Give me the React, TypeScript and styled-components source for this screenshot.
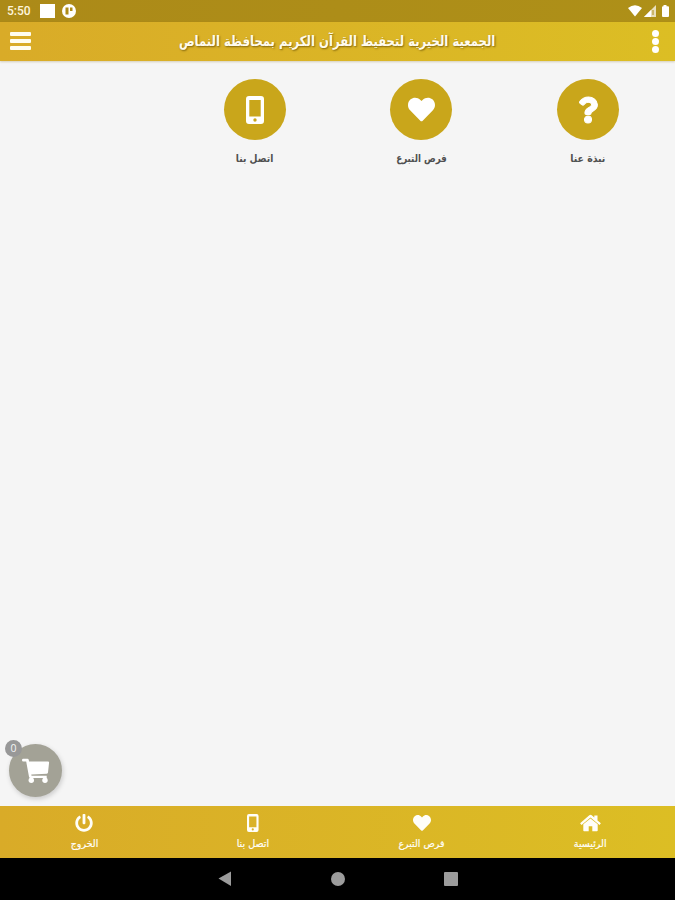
import React from "react";
import styled, { createGlobalStyle } from "styled-components";
import { FaHeart, FaPowerOff, FaQuestion } from "react-icons/fa";

const GlobalStyle = createGlobalStyle`
  * { box-sizing: border-box; }
  body { margin: 0; background: #f5f5f5; font-family: "DejaVu Sans", sans-serif; }
`;

const Screen = styled.div`
  display: flex;
  flex-direction: column;
  width: 675px;
  height: 900px;
  overflow: hidden;
  background: #f5f5f5;
`;

const StatusBar = styled.div`
  display: flex;
  align-items: center;
  justify-content: space-between;
  flex: 0 0 22px;
  padding: 0 5px 0 7px;
  background: linear-gradient(90deg, #ac8a18, #ae9018);
`;

const StatusGroup = styled.div<{ $gap: number }>`
  display: flex;
  align-items: center;
  gap: ${(p) => p.$gap}px;
  height: 22px;
  svg { display: block; }
`;

const Clock = styled.span`
  width: 25px;
  color: #fff6dc;
  font: 500 12px/23px Roboto, sans-serif;
  white-space: nowrap;
`;

const Square = styled.span`
  width: 15px;
  height: 14px;
  margin-left: 1px;
  background: #fff;
`;

const Header = styled.header`
  display: flex;
  align-items: center;
  justify-content: space-between;
  flex: 0 0 39px;
  padding: 0 15px 1px 10px;
  background: linear-gradient(90deg, #d9ab28, #dcbe24);
  box-shadow: 0 1px 2px rgba(120, 90, 0, 0.25);
`;

const Title = styled.h1`
  display: flex;
  justify-content: center;
  width: 320px;
  margin: 0 8px 0 0;
  color: #fffbee;
  font-size: 14px;
  font-weight: 700;
  line-height: 36px;
  white-space: nowrap;
  text-shadow: 1px 1px 2px rgba(80, 60, 0, 0.65);
`;

const Fit = styled.span<{ $scale: number }>`
  display: inline-block;
  transform: scaleX(${(p) => p.$scale});
`;

const MenuButton = styled.button`
  display: flex;
  flex-direction: column;
  gap: 3px;
  width: 21px;
  padding: 0;
  border: 0;
  background: none;
`;

const Bar = styled.span`
  height: 4px;
  border-radius: 1px;
  background: #fffdf0;
`;

const MoreButton = styled(MenuButton)`
  width: 8px;
  gap: 1px;
`;

const Dot = styled.span`
  width: 7px;
  height: 7px;
  border-radius: 50%;
  background: #fff;
`;

const Content = styled.main`
  position: relative;
  flex: 1;
  padding: 18px 4px 0 5px;
`;

const Shortcuts = styled.div`
  display: grid;
  grid-template-columns: repeat(4, 1fr);
`;

const Shortcut = styled.a`
  display: flex;
  flex-direction: column;
  align-items: center;
  color: #505050;
`;

const Disc = styled.span`
  display: grid;
  place-items: center;
  width: 62px;
  height: 61px;
  border-radius: 50%;
  background: #c9a61b;
  color: #fff;
`;

const BoldQuestion = styled(FaQuestion)`
  overflow: visible;
  stroke: currentColor;
  stroke-width: 20px;
`;

const Label = styled.span`
  margin-top: 9px;
  font-size: 10.5px;
  font-weight: 700;
  line-height: 18px;
  white-space: nowrap;
`;

const Cart = styled.button`
  position: absolute;
  left: 9px;
  bottom: 9px;
  display: grid;
  place-items: center;
  width: 53px;
  height: 53px;
  padding: 0;
  border: 0;
  border-radius: 50%;
  background: #a3a296;
  color: #fff;
  box-shadow: 1px 2px 5px rgba(0, 0, 0, 0.18);
`;

const Badge = styled.span`
  position: absolute;
  left: -4px;
  top: -4px;
  width: 17px;
  height: 17px;
  border-radius: 50%;
  background: #989898;
  color: #f4f4f4;
  font: 10.5px/17px "Open Sans", sans-serif;
  text-align: center;
`;

const TabBar = styled.nav`
  display: grid;
  grid-template-columns: repeat(4, 1fr);
  flex: 0 0 52px;
  background: linear-gradient(90deg, #d9ab28, #dcbe24);
`;

const Tab = styled.a`
  display: flex;
  flex-direction: column;
  align-items: center;
  padding-top: 8px;
  color: #fffef8;
`;

const TabLabel = styled.span`
  margin-top: 4px;
  font-size: 10px;
  line-height: 16px;
  white-space: nowrap;
  -webkit-text-stroke: 0.2px #fffef8;
`;

const SystemNav = styled.div`
  display: flex;
  justify-content: center;
  align-items: center;
  gap: 99px;
  flex: 0 0 42px;
  background: #000;
  svg { display: block; }
`;

const MobileIcon = ({ height }: { height: number }) => (
  <svg width={(height * 18) / 28} height={height} viewBox="0 0 18 28" fill="currentColor">
    <path
      fillRule="evenodd"
      d="M3 0h12a3 3 0 0 1 3 3v22a3 3 0 0 1-3 3H3a3 3 0 0 1-3-3V3a3 3 0 0 1 3-3zM3.300 4v16.500h11.400V4zM9 22.300a1.700 1.700 0 1 0 0 3.400 1.700 1.700 0 0 0 0-3.400z"
    />
  </svg>
);

const HomeIcon = () => (
  <svg width="21" height="18" viewBox="0 0 21 18" fill="currentColor">
    <path d="M10.500 4.400L17.700 10.300V16.500q0 .8-.8.800H12.300V12.200H8.700v5.100H4.100q-.8 0-.8-.8V10.300z" />
    <path d="M.1 9.200L9.300 1.300q1.200-.9 2.400 0L14.300 3.600V1.500h3.200v4.900l3.400 2.800-1.400 1.700L10.500 3.500 1.500 10.900z" />
  </svg>
);

const CartIcon = () => (
  <svg width="28" height="26" viewBox="0 0 28 26" fill="currentColor">
    <path d="M1.300.8H5.500q1 0 1.300 1.100L7.100 3.400H26q1.200 0 1.100 1.200L26 14.600q-.1 1-1.100 1.100L9.300 16.500l.2 1.300H24.700v2.200H8.500q-1.300 0-1.500-1.300L4.200 3.600H1.300Q0 3.600 0 2.200T1.300.8z" />
    <circle cx="9.300" cy="22.200" r="2.700" />
    <circle cx="23" cy="22.200" r="2.700" />
  </svg>
);

const shortcuts = [
  { label: "اتصل بنا", icon: <MobileIcon height={28} />, scale: 0.87 },
  { label: "فرص التبرع", icon: <FaHeart size={27} />, scale: 0.83 },
  { label: "نبذة عنا", icon: <BoldQuestion size={26} />, scale: 0.89 },
];

const tabs = [
  { label: "الخروج", icon: <FaPowerOff size={18} />, scale: 0.95 },
  { label: "اتصل بنا", icon: <MobileIcon height={18} />, scale: 0.96 },
  { label: "فرص التبرع", icon: <FaHeart size={18} />, scale: 0.94 },
  { label: "الرئيسية", icon: <HomeIcon />, scale: 0.95 },
];

export default function App() {
  return (
    <Screen>
      <GlobalStyle />
      <StatusBar>
        <StatusGroup $gap={7}>
          <Clock>5:50</Clock>
          <Square />
          <svg width="14" height="14" viewBox="0 0 14 14">
            <circle cx="7" cy="7" r="7" fill="#fff" />
            <path d="M3.500 3.500h3v7h-3zM8 3.500h2.500V7H8z" fill="#ad8c18" />
          </svg>
        </StatusGroup>
        <StatusGroup $gap={2}>
          <svg width="14" height="12" viewBox="0 0 14 12">
            <path d="M0 3Q7-2.4 14 3L7 11.5z" fill="#fff" />
          </svg>
          <svg width="12" height="12" viewBox="0 0 12 12">
            <path d="M12 0v12H0z" fill="#e9dfbd" />
            <path d="M7 5v7H0z" fill="#fff" />
            <path d="M9 5v5" stroke="#ad8c18" />
          </svg>
          <svg width="12" height="12" viewBox="0 0 12 12">
            <path d="M5.500 0h3v1.200H10q1 0 1 1V11q0 1-1 1H5q-1 0-1-1V2.200q0-1 1-1h.5z" fill="#fff" />
          </svg>
        </StatusGroup>
      </StatusBar>
      <Header>
        <MenuButton aria-label="القائمة">
          <Bar />
          <Bar />
          <Bar />
        </MenuButton>
        <Title dir="rtl">
          <Fit $scale={0.832}>الجمعية الخيرية لتحفيظ القرآن الكريم بمحافظة النماص</Fit>
        </Title>
        <MoreButton aria-label="المزيد">
          <Dot />
          <Dot />
          <Dot />
        </MoreButton>
      </Header>
      <Content>
        <Shortcuts>
          <span />
          {shortcuts.map((s) => (
            <Shortcut key={s.label}>
              <Disc>{s.icon}</Disc>
              <Label dir="rtl">
                <Fit $scale={s.scale}>{s.label}</Fit>
              </Label>
            </Shortcut>
          ))}
        </Shortcuts>
        <Cart aria-label="السلة">
          <CartIcon />
          <Badge>0</Badge>
        </Cart>
      </Content>
      <TabBar>
        {tabs.map((t) => (
          <Tab key={t.label}>
            {t.icon}
            <TabLabel dir="rtl">
              <Fit $scale={t.scale}>{t.label}</Fit>
            </TabLabel>
          </Tab>
        ))}
      </TabBar>
      <SystemNav>
        <svg width="14" height="16" viewBox="0 0 14 16">
          <path d="M0.500 7.500L13 0.500V15z" fill="#9c9c9c" />
        </svg>
        <svg width="14" height="16" viewBox="0 0 14 16">
          <circle cx="7" cy="8" r="7" fill="#9c9c9c" />
        </svg>
        <svg width="14" height="16" viewBox="0 0 14 16">
          <rect y="1" width="14" height="14" rx="1" fill="#9c9c9c" />
        </svg>
      </SystemNav>
    </Screen>
  );
}
